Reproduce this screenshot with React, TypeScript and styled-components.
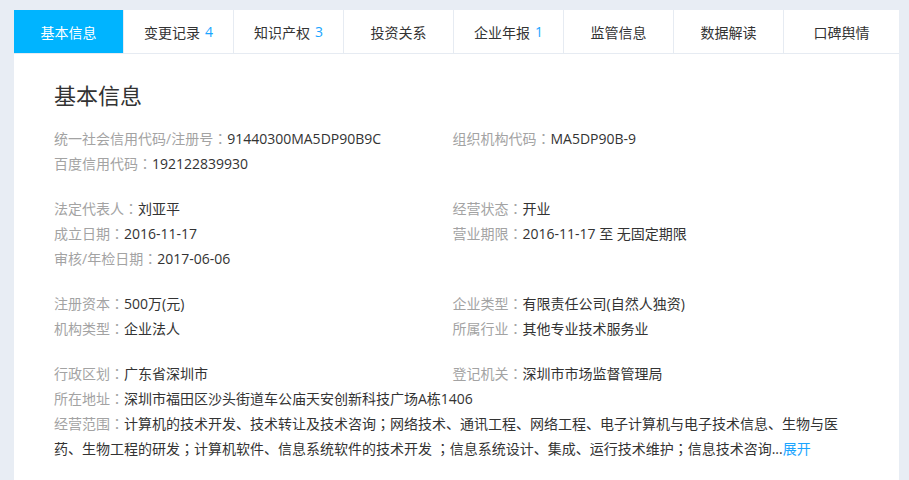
import React from "react";
import styled, { createGlobalStyle } from "styled-components";

const GlobalStyle = createGlobalStyle`
  html, body {
    margin: 0;
    padding: 0;
    background: #e8edf4;
    font-family: "Open Sans", "Noto Sans CJK SC", sans-serif;
    font-size: 14px;
    color: #333;
  }
`;

const Page = styled.div`
  padding: 10px 0 0 14px;
  height: 470px;
  overflow: hidden;
`;

const Panel = styled.main`
  width: 885px;
  min-height: 470px;
  background: #fff;
`;

const TabBar = styled.nav`
  display: flex;
  border-bottom: 1px solid #e6ebf2;
`;

const Tab = styled.div<{ $active?: boolean }>`
  flex: 0 0 110px;
  height: 43px;
  display: flex;
  align-items: center;
  justify-content: center;
  border-right: 1px solid #e6ebf2;
  box-sizing: border-box;
  background: ${p => (p.$active ? "#00b4ff" : "#fff")};
  color: ${p => (p.$active ? "#fff" : "#333")};
  font-size: 14px;
  cursor: pointer;

  &:last-child {
    flex: 1;
    border-right: none;
  }
`;

const Count = styled.span`
  color: #1ba5ff;
  margin-left: 5px;
`;

const Content = styled.section`
  padding: 26px 48px 0 40px;
`;

const Title = styled.h2`
  margin: 0 0 16px;
  font-size: 22px;
  font-weight: normal;
  line-height: 30px;
  color: #333;
`;

const Group = styled.div`
  display: grid;
  grid-template-columns: 1fr 1fr;
  margin-bottom: 20px;
`;

const Field = styled.div<{ $wide?: boolean }>`
  grid-column: ${p => (p.$wide ? "1 / span 2" : "auto")};
  line-height: 25px;
  color: #333;
`;

const Label = styled.span`
  color: #a3a3a3;
`;

// full-width punctuation drawn centred, as in the original
const Punct = styled.span`
  font-family: "Noto Sans CJK TC", sans-serif;
`;

const More = styled.a`
  color: #1ba5ff;
  cursor: pointer;
`;

const tabs = [
  { name: "基本信息" },
  { name: "变更记录", count: 4 },
  { name: "知识产权", count: 3 },
  { name: "投资关系" },
  { name: "企业年报", count: 1 },
  { name: "监管信息" },
  { name: "数据解读" },
  { name: "口碑舆情" }
];

type Item = { label: string; value: string } | null;

const groups: Item[][] = [
  [
    { label: "统一社会信用代码/注册号", value: "91440300MA5DP90B9C" },
    { label: "组织机构代码", value: "MA5DP90B-9" },
    { label: "百度信用代码", value: "192122839930" }
  ],
  [
    { label: "法定代表人", value: "刘亚平" },
    { label: "经营状态", value: "开业" },
    { label: "成立日期", value: "2016-11-17" },
    { label: "营业期限", value: "2016-11-17 至 无固定期限" },
    { label: "审核/年检日期", value: "2017-06-06" }
  ],
  [
    { label: "注册资本", value: "500万(元)" },
    { label: "企业类型", value: "有限责任公司(自然人独资)" },
    { label: "机构类型", value: "企业法人" },
    { label: "所属行业", value: "其他专业技术服务业" }
  ],
  [
    { label: "行政区划", value: "广东省深圳市" },
    { label: "登记机关", value: "深圳市市场监督管理局" }
  ]
];

const scope =
  "计算机的技术开发、技术转让及技术咨询；网络技术、通讯工程、网络工程、电子计算机与电子技术信息、生物与医药、生物工程的研发；计算机软件、信息系统软件的技术开发 ；信息系统设计、集成、运行技术维护；信息技术咨询...";

const withPunct = (text: string) =>
  text.split("；").map((part, i) => (
    <React.Fragment key={i}>
      {i > 0 && <Punct>；</Punct>}
      {part}
    </React.Fragment>
  ));

const FieldLabel = ({ text }: { text: string }) => (
  <Label>
    {text}
    <Punct>：</Punct>
  </Label>
);

export default () => {
  const [active, setActive] = React.useState(0);

  return (
    <Page>
      <GlobalStyle />
      <Panel>
        <TabBar>
          {tabs.map((t, i) => (
            <Tab key={t.name} $active={i === active} onClick={() => setActive(i)}>
              {t.name}
              {t.count !== undefined && <Count>{t.count}</Count>}
            </Tab>
          ))}
        </TabBar>

        <Content>
          <Title>基本信息</Title>

          {groups.map((g, gi) => (
            <Group key={gi}>
              {g.map((x, i) =>
                x ? (
                  <Field key={i}>
                    <FieldLabel text={x.label} />
                    {x.value}
                  </Field>
                ) : (
                  <Field key={i} />
                )
              )}
              {gi === groups.length - 1 && (
                <>
                  <Field $wide>
                    <FieldLabel text="所在地址" />
                    深圳市福田区沙头街道车公庙天安创新科技广场A栋1406
                  </Field>
                  <Field $wide>
                    <FieldLabel text="经营范围" />
                    {withPunct(scope)}
                    <More>展开</More>
                  </Field>
                </>
              )}
            </Group>
          ))}
        </Content>
      </Panel>
    </Page>
  );
};
